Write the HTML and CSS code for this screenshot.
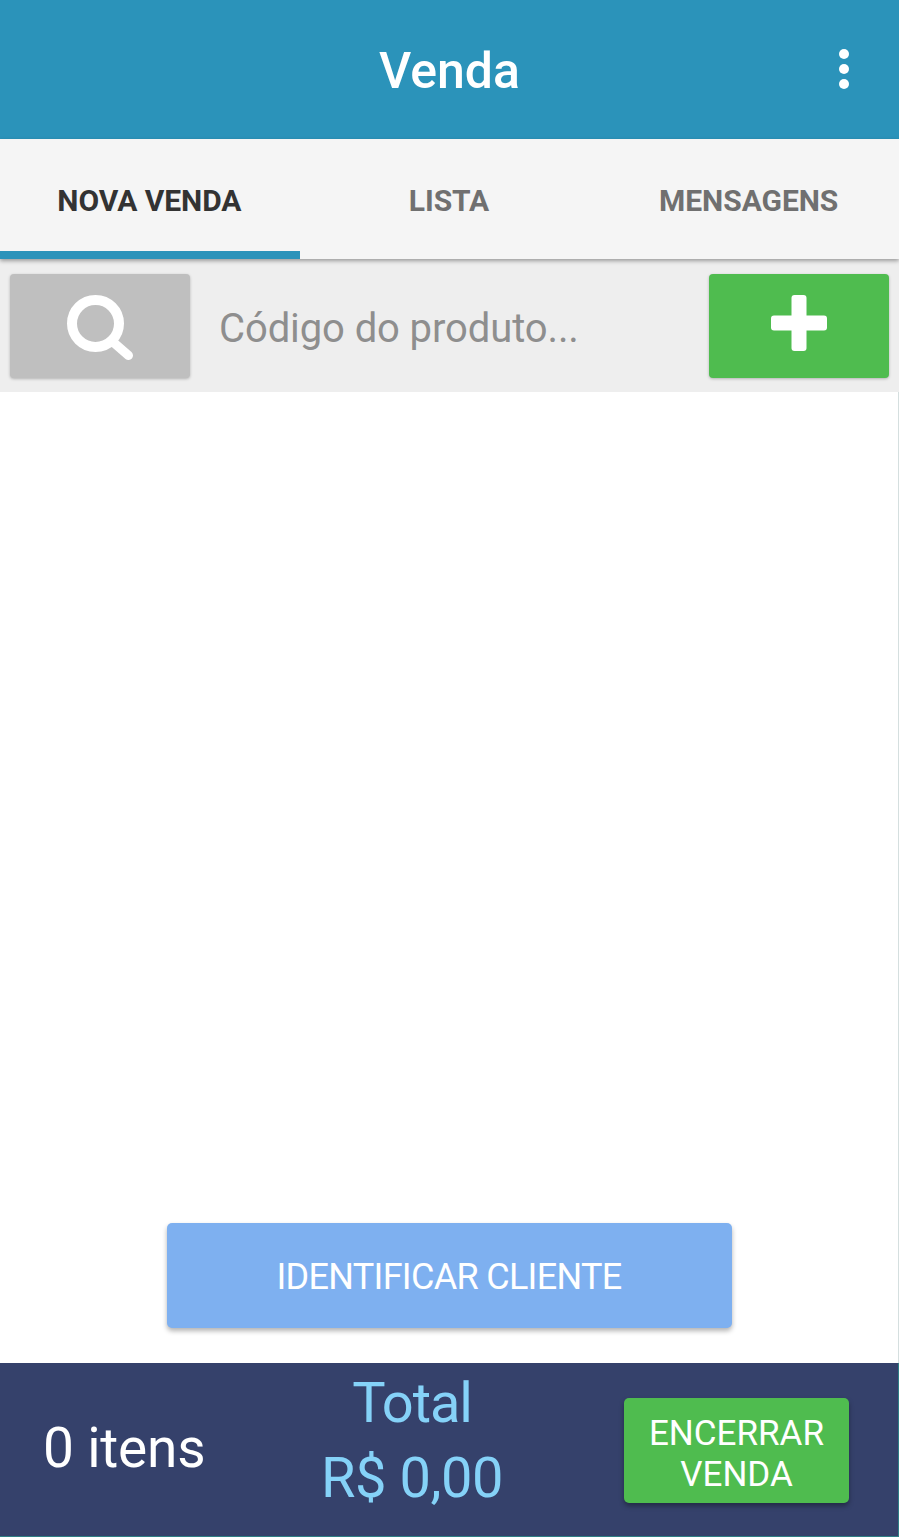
FILE: index.html
```html
<!DOCTYPE html>
<html lang="pt-BR">
<head>
  <meta charset="UTF-8">
  <meta name="viewport" content="width=device-width, initial-scale=1.0">
  <title>Venda</title>
  <link rel="stylesheet" href="styles.css">
</head>
<body>
  <div class="app">
    <!-- Top bar -->
    <header class="topbar">
      <h1>Venda</h1>
      <button class="menu-btn" aria-label="Menu">
        <span></span><span></span><span></span>
      </button>
    </header>

    <!-- Tabs -->
    <nav class="tabs">
      <a class="tab active">NOVA VENDA</a>
      <a class="tab">LISTA</a>
      <a class="tab">MENSAGENS</a>
    </nav>

    <!-- Product code search -->
    <div class="search-bar">
      <button class="square-btn grey" aria-label="Buscar">
        <svg width="68" height="68" viewBox="0 0 68 68">
          <circle cx="29.5" cy="31.5" r="23.5" fill="none" stroke="#fff" stroke-width="10"/>
          <path d="M47 50 L62.5 63.5" fill="none" stroke="#fff" stroke-width="9" stroke-linecap="round"/>
        </svg>
      </button>
      <input class="code-input" type="text" placeholder="Código do produto...">
      <button class="square-btn green" aria-label="Adicionar">
        <svg class="plus" width="56" height="56" viewBox="0 0 56 56">
          <rect x="20.5" y="0" width="15" height="56" rx="3" fill="#fff"/>
          <rect x="0" y="20.5" width="56" height="15" rx="3" fill="#fff"/>
        </svg>
      </button>
    </div>

    <main class="content">
      <button class="client-btn">IDENTIFICAR CLIENTE</button>
    </main>

    <!-- Bottom summary -->
    <footer class="summary">
      <div class="items">0 itens</div>
      <div class="total">
        <div class="total-label">Total</div>
        <div>R$ 0,00</div>
      </div>
      <button class="close-btn">ENCERRAR<br>VENDA</button>
    </footer>
  </div>
</body>
</html>
```

FILE: styles.css
```css
* {
  box-sizing: border-box;
}
body {
  margin: 0;
  font-family: Roboto, "Liberation Sans", sans-serif;
  background-color: #fff;
}
button {
  border: none;
  padding: 0;
  font-family: inherit;
  cursor: pointer;
}
.app {
  display: flex;
  flex-direction: column;
  height: 1537px;
}
.topbar {
  position: relative;
  display: flex;
  align-items: center;
  justify-content: center;
  height: 139px;
  padding-top: 2px;
  background-color: #2b93ba;
}
.topbar h1 {
  margin: 0;
  color: #fff;
  font-size: 50px;
  font-weight: 500;
}
.menu-btn {
  position: absolute;
  right: 50px;
  top: 49px;
  display: flex;
  flex-direction: column;
  gap: 5px;
  background: none;
}
.menu-btn span {
  display: block;
  width: 10px;
  height: 10px;
  border-radius: 50%;
  background-color: #fff;
}
.tabs {
  position: relative;
  display: flex;
  height: 120px;
  background-color: #f5f5f5;
  box-shadow: 0 2px 4px rgba(0, 0, 0, 0.35);
}
.tab {
  position: relative;
  flex: 1;
  display: flex;
  align-items: center;
  justify-content: center;
  padding-top: 2px;
  padding-right: 1px;
  color: #707070;
  font-size: 30px;
  font-weight: 700;
  letter-spacing: -0.05px;
}
.tab.active {
  color: #333;
}
.tab.active::after {
  content: "";
  position: absolute;
  left: 0;
  right: 0;
  bottom: 0;
  height: 8px;
  background-color: #2b93ba;
}
.search-bar {
  display: flex;
  align-items: center;
  justify-content: space-between;
  height: 133px;
  padding: 0 10px;
  background-color: #eee;
}
.square-btn {
  flex: none;
  display: flex;
  align-items: center;
  justify-content: center;
  width: 180px;
  height: 104px;
  border-radius: 4px;
  box-shadow: 0 1px 3px rgba(0, 0, 0, 0.25);
}
.square-btn.grey {
  background-color: #bfbfbf;
}
.square-btn.green {
  background-color: #4fbc4f;
}
.plus {
  margin-bottom: 6px;
}
.code-input {
  flex: 1;
  min-width: 0;
  margin: 6px 10px 0 29px;
  padding: 0;
  border: none;
  outline: none;
  background: none;
  font-family: inherit;
  font-size: 40px;
  letter-spacing: -0.1px;
}
.code-input::placeholder {
  color: #8e8e8e;
  opacity: 1;
}
.content {
  flex: 1;
  display: flex;
  align-items: flex-end;
  justify-content: center;
  padding-bottom: 35px;
  border-right: 1px solid #d5dfdf;
  background-color: #fff;
}
.client-btn {
  width: 565px;
  height: 105px;
  padding-top: 3px;
  border-radius: 5px;
  background-color: #7eb0f0;
  color: #fff;
  font-size: 36px;
  letter-spacing: -0.7px;
  box-shadow: 0 3px 5px rgba(0, 0, 0, 0.3);
}
.summary {
  display: flex;
  align-items: center;
  height: 174px;
  padding: 0 49px 0 43px;
  border-right: 1px solid #2f7f86;
  border-bottom: 1px solid #2f7f86;
  background-color: #35416b;
}
.items {
  width: 237px;
  padding-bottom: 4px;
  color: #fff;
  font-size: 55px;
  letter-spacing: -0.2px;
}
.total {
  display: flex;
  flex-direction: column;
  align-items: center;
  width: 264px;
  margin-top: -18px;
  color: #85d2f8;
  font-size: 56px;
  letter-spacing: -0.5px;
  line-height: 75px;
  white-space: nowrap;
}
.total-label {
  letter-spacing: -1.1px;
}
.close-btn {
  flex: none;
  width: 225px;
  height: 105px;
  margin-top: 1px;
  margin-left: auto;
  padding-top: 8px;
  border-radius: 5px;
  background-color: #4fbc4f;
  color: #fff;
  font-size: 35px;
  line-height: 41px;
  box-shadow: 0 3px 5px rgba(0, 0, 0, 0.35);
}
```
